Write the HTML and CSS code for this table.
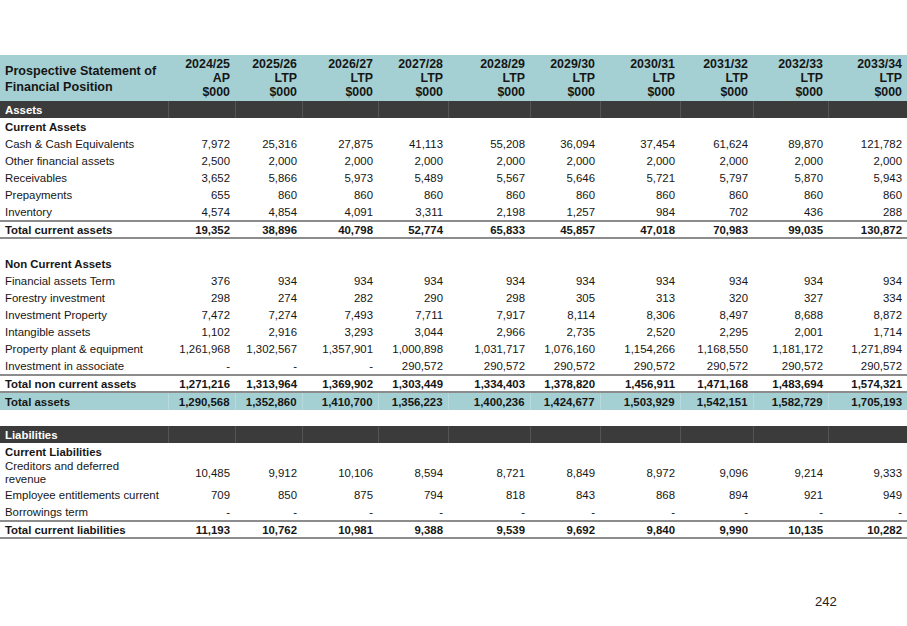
FILE: index.html
```html
<!DOCTYPE html>
<html>
<head>
<meta charset="utf-8">
<link rel="stylesheet" href="styles.css">
</head>
<body>
<div class="page">
<table class="fin">
<colgroup>
<col class="c-label"><col class="w67"><col class="w67"><col class="w76"><col class="w70"><col class="w82"><col class="w70"><col class="w80"><col class="w73"><col class="w75"><col class="w79">
</colgroup>
<thead>
<tr class="head">
<th class="title">Prospective Statement of Financial Position</th>
<th>2024/25<br>AP<br>$000</th>
<th>2025/26<br>LTP<br>$000</th>
<th>2026/27<br>LTP<br>$000</th>
<th>2027/28<br>LTP<br>$000</th>
<th>2028/29<br>LTP<br>$000</th>
<th>2029/30<br>LTP<br>$000</th>
<th>2030/31<br>LTP<br>$000</th>
<th>2031/32<br>LTP<br>$000</th>
<th>2032/33<br>LTP<br>$000</th>
<th>2033/34<br>LTP<br>$000</th>
</tr>
</thead>
<tbody>
<tr class="bar"><td>Assets</td><td></td><td></td><td></td><td></td><td></td><td></td><td></td><td></td><td></td><td></td></tr>
<tr class="sub"><td colspan="11">Current Assets</td></tr>
<tr><td>Cash &amp; Cash Equivalents</td><td>7,972</td><td>25,316</td><td>27,875</td><td>41,113</td><td>55,208</td><td>36,094</td><td>37,454</td><td>61,624</td><td>89,870</td><td>121,782</td></tr>
<tr><td>Other financial assets</td><td>2,500</td><td>2,000</td><td>2,000</td><td>2,000</td><td>2,000</td><td>2,000</td><td>2,000</td><td>2,000</td><td>2,000</td><td>2,000</td></tr>
<tr><td>Receivables</td><td>3,652</td><td>5,866</td><td>5,973</td><td>5,489</td><td>5,567</td><td>5,646</td><td>5,721</td><td>5,797</td><td>5,870</td><td>5,943</td></tr>
<tr><td>Prepayments</td><td>655</td><td>860</td><td>860</td><td>860</td><td>860</td><td>860</td><td>860</td><td>860</td><td>860</td><td>860</td></tr>
<tr><td>Inventory</td><td>4,574</td><td>4,854</td><td>4,091</td><td>3,311</td><td>2,198</td><td>1,257</td><td>984</td><td>702</td><td>436</td><td>288</td></tr>
<tr class="total"><td>Total current assets</td><td>19,352</td><td>38,896</td><td>40,798</td><td>52,774</td><td>65,833</td><td>45,857</td><td>47,018</td><td>70,983</td><td>99,035</td><td>130,872</td></tr>
<tr class="blank"><td colspan="11"></td></tr>
<tr class="sub"><td colspan="11">Non Current Assets</td></tr>
<tr><td>Financial assets Term</td><td>376</td><td>934</td><td>934</td><td>934</td><td>934</td><td>934</td><td>934</td><td>934</td><td>934</td><td>934</td></tr>
<tr><td>Forestry investment</td><td>298</td><td>274</td><td>282</td><td>290</td><td>298</td><td>305</td><td>313</td><td>320</td><td>327</td><td>334</td></tr>
<tr><td>Investment Property</td><td>7,472</td><td>7,274</td><td>7,493</td><td>7,711</td><td>7,917</td><td>8,114</td><td>8,306</td><td>8,497</td><td>8,688</td><td>8,872</td></tr>
<tr><td>Intangible assets</td><td>1,102</td><td>2,916</td><td>3,293</td><td>3,044</td><td>2,966</td><td>2,735</td><td>2,520</td><td>2,295</td><td>2,001</td><td>1,714</td></tr>
<tr><td>Property plant &amp; equipment</td><td>1,261,968</td><td>1,302,567</td><td>1,357,901</td><td>1,000,898</td><td>1,031,717</td><td>1,076,160</td><td>1,154,266</td><td>1,168,550</td><td>1,181,172</td><td>1,271,894</td></tr>
<tr class="last"><td>Investment in associate</td><td>-</td><td>-</td><td>-</td><td>290,572</td><td>290,572</td><td>290,572</td><td>290,572</td><td>290,572</td><td>290,572</td><td>290,572</td></tr>
<tr class="total"><td>Total non current assets</td><td>1,271,216</td><td>1,313,964</td><td>1,369,902</td><td>1,303,449</td><td>1,334,403</td><td>1,378,820</td><td>1,456,911</td><td>1,471,168</td><td>1,483,694</td><td>1,574,321</td></tr>
<tr class="grand"><td>Total assets</td><td>1,290,568</td><td>1,352,860</td><td>1,410,700</td><td>1,356,223</td><td>1,400,236</td><td>1,424,677</td><td>1,503,929</td><td>1,542,151</td><td>1,582,729</td><td>1,705,193</td></tr>
<tr class="blank"><td colspan="11"></td></tr>
<tr class="bar"><td>Liabilities</td><td></td><td></td><td></td><td></td><td></td><td></td><td></td><td></td><td></td><td></td></tr>
<tr class="sub"><td colspan="11">Current Liabilities</td></tr>
<tr class="two"><td>Creditors and deferred<br>revenue</td><td>10,485</td><td>9,912</td><td>10,106</td><td>8,594</td><td>8,721</td><td>8,849</td><td>8,972</td><td>9,096</td><td>9,214</td><td>9,333</td></tr>
<tr><td>Employee entitlements current</td><td>709</td><td>850</td><td>875</td><td>794</td><td>818</td><td>843</td><td>868</td><td>894</td><td>921</td><td>949</td></tr>
<tr><td>Borrowings term</td><td>-</td><td>-</td><td>-</td><td>-</td><td>-</td><td>-</td><td>-</td><td>-</td><td>-</td><td>-</td></tr>
<tr class="total"><td>Total current liabilities</td><td>11,193</td><td>10,762</td><td>10,981</td><td>9,388</td><td>9,539</td><td>9,692</td><td>9,840</td><td>9,990</td><td>10,135</td><td>10,282</td></tr>
</tbody>
</table>
<div class="pagenum">242</div>
</div>
</body>
</html>
```

FILE: styles.css
```css
html, body {
  margin: 0;
  padding: 0;
  background: #ffffff;
}
body {
  font-family: "Liberation Sans", Arial, sans-serif;
  color: #161616;
  font-size: 11.4px;
}
.page {
  width: 907px;
  height: 626px;
  padding-top: 55px;
  box-sizing: border-box;
  position: relative;
}
.fin {
  border-collapse: collapse;
  table-layout: fixed;
  width: 907px;
}
.c-label { width: 168px; }
.w67 { width: 67px; }
.w70 { width: 70px; }
.w73 { width: 73px; }
.w75 { width: 75px; }
.w76 { width: 76px; }
.w79 { width: 79px; }
.w80 { width: 80px; }
.w82 { width: 82px; }

.fin td, .fin th {
  padding: 0 5px;
  height: 17px;
  line-height: 14px;
  text-align: right;
  white-space: nowrap;
  vertical-align: middle;
}
.fin td:first-child, .fin th:first-child {
  text-align: left;
  white-space: normal;
  padding-right: 2px;
}
.head th {
  background: #a4d0d3;
  font-weight: bold;
  font-size: 12.4px;
  height: 44px;
  line-height: 14px;
  padding-top: 0;
  padding-bottom: 0;
}
.head th.title {
  font-size: 12.6px;
  line-height: 16px;
  padding-top: 2px;
}
.bar td {
  background: #3b3b3b;
  color: #ffffff;
  font-weight: bold;
  height: 17px;
  border-left: 1px solid #545454;
}
.bar td:first-child {
  border-left: none;
}
.sub td {
  font-weight: bold;
}
.total td {
  font-weight: bold;
  border-top: 2px solid #8c8c8c;
  border-bottom: 2px solid #8c8c8c;
  height: 15px;
}
.grand td {
  font-weight: bold;
  background: #a4d0d3;
  height: 17px;
  border-left: 1px solid #b6dadd;
}
.grand td:first-child {
  border-left: none;
}
.blank td {
  height: 16px;
}
.two td {
  height: 26px;
  line-height: 13px;
}
.pagenum {
  position: absolute;
  left: 815px;
  top: 594px;
  font-size: 13px;
  color: #222222;
}
```
